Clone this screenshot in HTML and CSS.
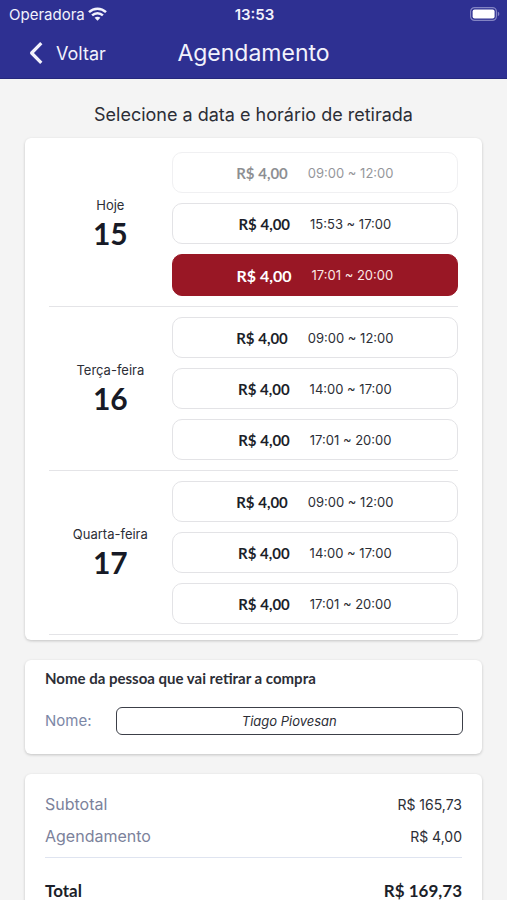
FILE: index.html
```html
<!DOCTYPE html>
<html lang="pt-BR">
<head>
<meta charset="utf-8">
<meta name="viewport" content="width=device-width, initial-scale=1">
<title>Agendamento</title>
<link rel="stylesheet" href="styles.css">
</head>
<body>
<div class="app">
  <header class="header">
    <div class="status">
      <div class="carrier">
        <span>Operadora</span>
        <svg width="19" height="14" viewBox="0 0 19 14" fill="none" stroke="currentColor" stroke-width="2.5" aria-hidden="true">
          <path d="M1 5.2C5.8 .6 13.2 .6 18 5.2"/>
          <path d="M4.1 8.3c3.1-2.9 7.7-2.9 10.8 0"/>
          <path d="M9.5 13.7 6.6 10.8c1.6-1.5 4.2-1.5 5.8 0z" fill="currentColor" stroke="none"/>
        </svg>
      </div>
      <span class="clock">13:53</span>
      <svg class="battery" width="30" height="14" viewBox="0 0 30 14" aria-hidden="true">
        <rect x=".6" y=".6" width="25.8" height="12.8" rx="4" fill="none" stroke="#8384c3" stroke-width="1.2"/>
        <rect x="2.6" y="2.6" width="22" height="8.8" rx="2" fill="#fff"/>
        <path d="M27.8 4.8c2 .6 2 3.8 0 4.4z" fill="#8384c3"/>
      </svg>
    </div>
    <nav class="nav">
      <a class="back" href="#">
        <svg width="14" height="22" viewBox="0 0 14 22" fill="none" stroke="currentColor" stroke-width="3.2" stroke-linejoin="round" aria-hidden="true"><path d="M12.3 1.2 2.6 11l9.7 9.8"/></svg>
        <span>Voltar</span>
      </a>
      <h1 class="title">Agendamento</h1>
    </nav>
  </header>

  <main class="content">
    <h2 class="prompt">Selecione a data e horário de retirada</h2>

    <section class="card schedule">
      <div class="day">
        <div class="date"><span class="weekday">Hoje</span><strong class="number">15</strong></div>
        <div class="slots">
          <button class="slot" type="button" disabled><b>R$ 4,00</b><span>09:00 ~ 12:00</span></button>
          <button class="slot" type="button"><b>R$ 4,00</b><span>15:53 ~ 17:00</span></button>
          <button class="slot selected" type="button" aria-pressed="true"><b>R$ 4,00</b><span>17:01 ~ 20:00</span></button>
        </div>
      </div>
      <div class="day">
        <div class="date"><span class="weekday">Terça-feira</span><strong class="number">16</strong></div>
        <div class="slots">
          <button class="slot" type="button"><b>R$ 4,00</b><span>09:00 ~ 12:00</span></button>
          <button class="slot" type="button"><b>R$ 4,00</b><span>14:00 ~ 17:00</span></button>
          <button class="slot" type="button"><b>R$ 4,00</b><span>17:01 ~ 20:00</span></button>
        </div>
      </div>
      <div class="day">
        <div class="date"><span class="weekday">Quarta-feira</span><strong class="number">17</strong></div>
        <div class="slots">
          <button class="slot" type="button"><b>R$ 4,00</b><span>09:00 ~ 12:00</span></button>
          <button class="slot" type="button"><b>R$ 4,00</b><span>14:00 ~ 17:00</span></button>
          <button class="slot" type="button"><b>R$ 4,00</b><span>17:01 ~ 20:00</span></button>
        </div>
      </div>
    </section>

    <section class="card person">
      <h3 class="person-title">Nome da pessoa que vai retirar a compra</h3>
      <div class="field">
        <label for="name">Nome:</label>
        <input id="name" type="text" value="Tiago Piovesan">
      </div>
    </section>

    <section class="card summary">
      <dl class="totals">
        <div class="row"><dt>Subtotal</dt><dd>R$ 165,73</dd></div>
        <div class="row"><dt>Agendamento</dt><dd>R$ 4,00</dd></div>
        <div class="row total"><dt>Total</dt><dd>R$ 169,73</dd></div>
      </dl>
    </section>
  </main>
</div>
</body>
</html>
```

FILE: styles.css
```css
* {
  box-sizing: border-box;
}

body,
h1,
h2,
h3,
dl,
dd {
  margin: 0;
}

body {
  background: #f4f4f4;
  color: #2c2e36;
  font-family: Inter, "Liberation Sans", sans-serif;
}

button,
input {
  font: inherit;
  color: inherit;
}

.app {
  height: 100vh;
  overflow: hidden;
}

.header {
  background: #2e3092;
  border-bottom: 1px solid #25277c;
  color: #f2f2fc;
}

.status {
  display: grid;
  grid-template-columns: 1fr auto 1fr;
  align-items: center;
  height: 28px;
  padding: 0 7px 0 9px;
  font-size: 15px;
}

.carrier {
  display: flex;
  align-items: center;
  gap: 3px;
}

.clock {
  font-weight: 600;
}

.battery {
  justify-self: end;
}

.nav {
  display: grid;
  grid-template-columns: 1fr auto 1fr;
  align-items: center;
  height: 50px;
  padding: 0 29px;
}

.back {
  display: flex;
  align-items: center;
  gap: 13px;
  color: inherit;
  font-size: 18px;
  text-decoration: none;
}

.title {
  font-size: 23px;
  font-weight: 400;
  line-height: 26px;
}

.content {
  display: flex;
  flex-direction: column;
  gap: 20px;
  padding: 24px 25px;
}

.prompt {
  margin-bottom: -9px;
  font-size: 18px;
  font-weight: 400;
  line-height: 24px;
  text-align: center;
}

.card {
  background: #fff;
  border-radius: 6px;
  box-shadow: 0 1px 3px rgba(0, 0, 0, 0.2);
}

.schedule {
  padding: 4px 24px 5px;
}

.day {
  display: grid;
  grid-template-columns: 3fr 7fr;
  border-bottom: 1px solid #e4e4e7;
  padding: 10px 0;
}

.date {
  display: flex;
  flex-direction: column;
  align-items: center;
  justify-content: center;
}

.weekday {
  font-size: 13px;
  line-height: 18px;
}

.number {
  color: #171a26;
  font-family: Lato, sans-serif;
  font-size: 30px;
  line-height: 38px;
}

.slots {
  display: flex;
  flex-direction: column;
  gap: 10px;
}

.slot {
  display: flex;
  align-items: center;
  justify-content: center;
  gap: 20px;
  height: 41px;
  padding: 0;
  border: 1px solid #e3e3e6;
  border-radius: 10px;
  background: #fff;
  font-size: 13px;
}

.slot b {
  color: #1c1f2a;
  font-family: Lato, sans-serif;
  font-size: 15px;
}

.slot:disabled {
  opacity: 0.5;
}

.slot.selected {
  height: 42px;
  border-color: #991725;
  background: #991725;
  color: #fbe9e6;
}

.slot.selected b {
  color: #fff;
  font-size: 16px;
}

.person {
  padding: 8px 19px 19px 20px;
}

.person-title {
  font-family: Lato, sans-serif;
  font-size: 15px;
  line-height: 20px;
}

.field {
  display: flex;
  align-items: center;
  gap: 24px;
  margin-top: 19px;
}

.field label {
  color: #7c87a6;
  font-size: 15px;
  line-height: 20px;
}

.field input {
  flex: 1;
  min-width: 0;
  height: 28px;
  padding: 0 8px;
  border: 1px solid #3c3f48;
  border-radius: 6px;
  background: #fff;
  font-size: 13px;
  font-style: italic;
  text-align: center;
}

.summary {
  padding: 14px 20px;
}

.row {
  display: flex;
  justify-content: space-between;
  align-items: center;
  height: 32px;
}

.row dt {
  color: #7c829b;
  font-size: 16px;
}

.row dd {
  font-size: 14px;
}

.total {
  height: 66px;
  margin-top: 5px;
  border-top: 1px solid #dfe4f0;
  font-family: Lato, sans-serif;
  font-weight: 700;
}

.total dt,
.total dd {
  color: #1c1f2a;
  font-size: 17px;
}
```
